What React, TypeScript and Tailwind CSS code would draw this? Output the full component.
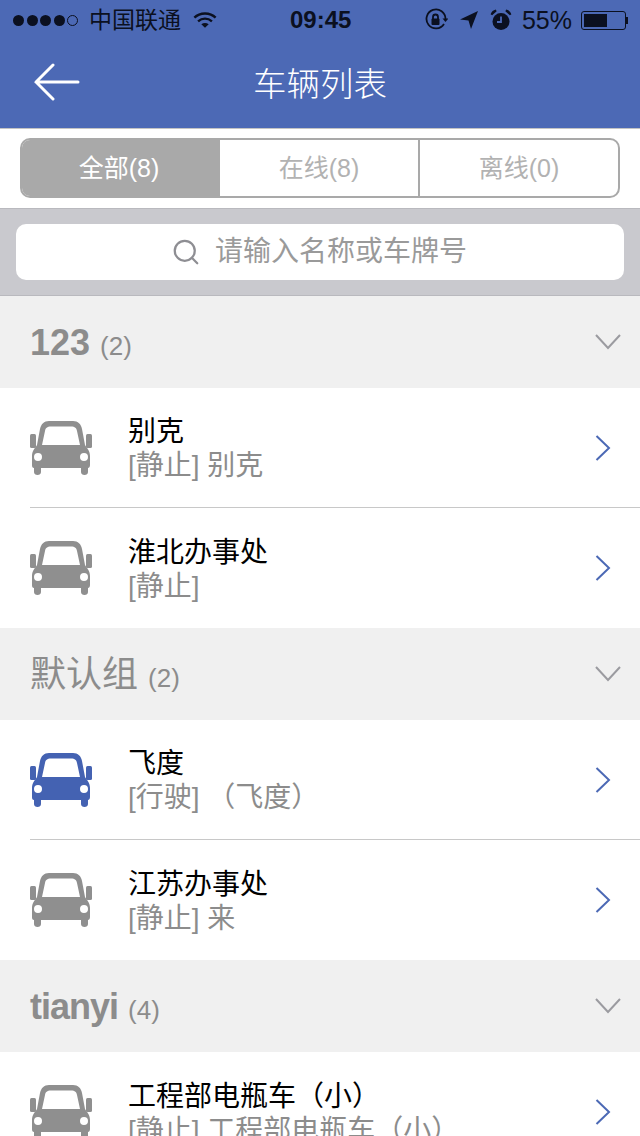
import React from 'react';
import { Search } from 'lucide-react';

const FONT = "font-['Liberation_Sans','Noto_Sans_CJK_SC',sans-serif]";

type Vehicle = { name: string; status: string; note?: string; moving?: boolean };
type Group = { title: string; count: number; titleClass: string; vehicles: Vehicle[] };

const groups: Group[] = [
  {
    title: '123',
    count: 2,
    titleClass: 'text-[36px] font-bold',
    vehicles: [
      { name: '别克', status: '[静止]', note: '别克' },
      { name: '淮北办事处', status: '[静止]' },
    ],
  },
  {
    title: '默认组',
    count: 2,
    titleClass: 'text-[36px]',
    vehicles: [
      { name: '飞度', status: '[行驶]', note: '（飞度）', moving: true },
      { name: '江苏办事处', status: '[静止]', note: '来' },
    ],
  },
  {
    title: 'tianyi',
    count: 4,
    titleClass: 'text-[36px] font-bold tracking-[-1px]',
    vehicles: [{ name: '工程部电瓶车（小）', status: '[静止]', note: '工程部电瓶车（小）' }],
  },
];

const CarIcon = ({ className }: { className: string }) => (
  <svg viewBox="0 0 62 54" className={className} fill="currentColor">
    <path
      fillRule="evenodd"
      d="M19 0H43C48 0 51 3 52 8L55 24C57 27 60 30 60 35V44C60 46 59 47 58 47V51C58 53 56.500 54 54.500 54S51 53 51 51V47H11V51C11 53 9.500 54 7.500 54S4 53 4 51V47C2.500 47 2 46 2 44V35C2 30 5 27 7 24L10 8C11 3 14 0 19 0ZM21 5.500C17 5.500 15.500 7 15 10L12 24H50L47 10C46.500 7 45 5.500 41 5.500ZM8 32a4 4 0 1 0 0 8 4 4 0 0 0 0-8ZM54 32a4 4 0 1 0 0 8 4 4 0 0 0 0-8Z"
    />
    <rect x="0" y="13" width="6" height="14" rx="1.500" />
    <rect x="56" y="13" width="6" height="14" rx="1.500" />
  </svg>
);

const StatusBar = () => (
  <div className="flex h-10 items-center pl-[13px] pr-3 text-[#0b1020]">
    <div className="flex w-[277px] items-center">
      <div className="flex gap-[2.500px]">
        {[0, 1, 2, 3].map((i) => (
          <span key={i} className="h-[11px] w-[11px] rounded-full bg-[#0b1020]" />
        ))}
        <span className="h-[11px] w-[11px] rounded-full border border-[#0b1020]" />
      </div>
      <span className="ml-[11px] text-[23px] leading-none">中国联通</span>
      <svg viewBox="0 0 26 20" className="ml-3 h-5 w-6" fill="none" stroke="currentColor" strokeWidth="2.600">
        <path d="M1.500 7.500C7.500 1.500 18.500 1.500 24.500 7.500" />
        <path d="M5.500 11.500c4.500-4 10.500-4 15 0" />
        <path d="M13 18.500l-4-4c2.500-1.500 5.500-1.500 8 0z" fill="currentColor" stroke="none" />
      </svg>
    </div>
    <span className="text-[24px] font-bold leading-none">09:45</span>
    <div className="ml-auto flex items-center">
      <svg viewBox="0 0 24 24" className="h-6 w-6" fill="none" stroke="currentColor" strokeWidth="1.800">
        <path d="M20 16a9.500 9.500 0 1 1 1.500-5" />
        <path d="M18.500 10.500h6L21.500 14z" fill="currentColor" stroke="none" />
        <rect x="7.500" y="10.500" width="8" height="6.500" rx="1" fill="currentColor" stroke="none" />
        <path d="M9 11V9a2.500 2.500 0 0 1 5 0v2" />
      </svg>
      <svg viewBox="0 0 20 20" className="ml-[11px] h-5 w-5" fill="currentColor">
        <path d="M19 1L1 9.500l8.500 1L12 19z" />
      </svg>
      <svg viewBox="0 0 22 22" className="ml-[11px] h-[22px] w-[22px]" fill="currentColor">
        <circle cx="11" cy="12.500" r="8.500" />
        <path d="M1.500 5.500C2.500 3 4 2 6 1.500L1.500 5.500zM20.500 5.500C19.500 3 18 2 16 1.500l4.500 4z" stroke="currentColor" strokeWidth="2" />
        <path d="M11 7.500v5.500H7" fill="none" stroke="#4c69b5" strokeWidth="1.800" />
      </svg>
      <span className="ml-[10px] text-[25px] leading-none">55%</span>
      <div className="ml-[9px] flex items-center">
        <div className="h-[19px] w-[45px] rounded-[3px] border border-[#0b1020] p-[2px]">
          <div className="h-full w-[23px] bg-[#0b1020]" />
        </div>
        <span className="h-[7px] w-[2px] bg-[#0b1020]" />
      </div>
    </div>
  </div>
);

export default function App() {
  return (
    <div className={`${FONT} flex h-[1136px] w-[640px] flex-col overflow-hidden bg-white`}>
      <header className="h-[129px] shrink-0 border-b border-[#c3c3c3] bg-[#4c69b5]">
        <StatusBar />
        <div className="relative flex h-[88px] items-center justify-center">
          <svg viewBox="0 0 46 38" className="absolute left-[34px] top-[23px] h-[38px] w-[46px]" fill="none" stroke="white" strokeWidth="3" strokeLinecap="round">
            <path d="M19 2L2 19l17 17M2 19h42" />
          </svg>
          <h1 className="pt-px text-[33.500px] font-light leading-none text-white">车辆列表</h1>
        </div>
      </header>

      <div className="h-[79px] shrink-0 px-5 pt-[9px]">
        <div className="flex h-[60px] overflow-hidden rounded-[10px] border-2 border-[#a9a9a9] text-[25px] text-[#b2b2b2]">
          <div className="flex w-[198px] items-center justify-center bg-[#a9a9a9] pr-1 pt-px text-white">全部(8)</div>
          <div className="flex w-[200px] items-center justify-center border-r-2 border-[#a9a9a9] pt-px">在线(8)</div>
          <div className="flex flex-1 items-center justify-center pt-px">离线(0)</div>
        </div>
      </div>

      <div className="h-[88px] shrink-0 border-y border-[#b9b9be] bg-[#c9c9ce] px-4 pt-[15px]">
        <div className="flex h-14 items-center justify-center rounded-[10px] bg-white pr-[2px] text-[28px] text-[#9a9a9a]">
          <Search className="mr-[14px] h-[30px] w-[30px] text-[#8e8e93]" strokeWidth={1.800} />
          请输入名称或车牌号
        </div>
      </div>

      {groups.map((group) => (
        <section key={group.title} className="shrink-0">
          <div className="flex h-[92px] items-center justify-between bg-[#f0f0f0] pl-[30px] pr-[19px] text-[#8c8c8c]">
            <div className="flex items-baseline pt-[2px]">
              <span className={group.titleClass}>{group.title}</span>
              <span className="ml-[10px] text-[26px]">({group.count})</span>
            </div>
            <svg viewBox="0 0 26 16" className="h-4 w-[26px]" fill="none" stroke="#9b9ba0" strokeWidth="2">
              <path d="M1 1l12 13L25 1" />
            </svg>
          </div>
          {group.vehicles.map((vehicle, i) => (
            <div key={vehicle.name} className="pl-[30px]">
              <div className={`flex h-[120px] items-center ${i < group.vehicles.length - 1 ? 'border-b border-[#c8c8c8]' : ''}`}>
                <CarIcon className={`h-[54px] w-[62px] shrink-0 ${vehicle.moving ? 'text-[#4462b2]' : 'text-[#8f8f8f]'}`} />
                <div className="ml-9 flex flex-1 items-center justify-between">
                  <div className="flex flex-col pt-[3px]">
                    <span className="text-[28px] leading-[34px] text-black">{vehicle.name}</span>
                    <span className="text-[28px] leading-[34px] text-[#8c8c8c]">
                      {vehicle.status}
                      {vehicle.note ? ` ${vehicle.note}` : ''}
                    </span>
                  </div>
                  <svg viewBox="0 0 16 26" className="mr-[29px] h-[26px] w-4" fill="none" stroke="#4c69b5" strokeWidth="2">
                    <path d="M1.500 1L14 13 1.500 25" />
                  </svg>
                </div>
              </div>
            </div>
          ))}
        </section>
      ))}
    </div>
  );
}
